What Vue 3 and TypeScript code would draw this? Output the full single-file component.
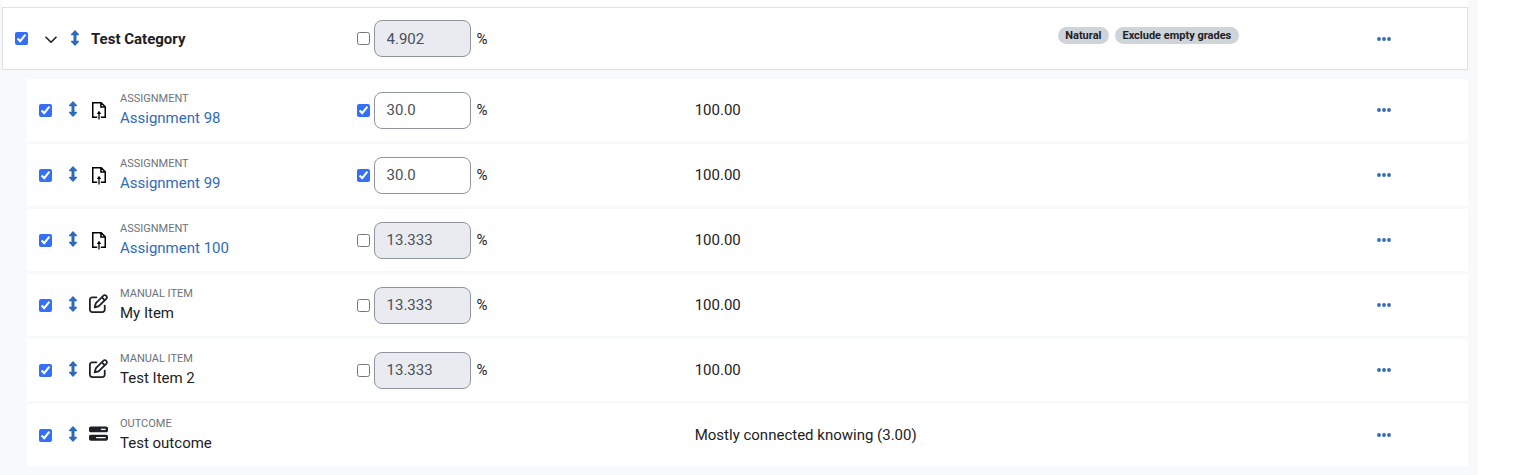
<script setup lang="ts">
import { ref } from 'vue'

type Kind = 'assignment' | 'manual' | 'outcome'

interface GradeItem {
  id: number
  kind: Kind
  type: string
  name: string
  selected: boolean
  weight?: string
  override: boolean
  max: string
}

const category = ref({
  name: 'Test Category',
  selected: true,
  open: true,
  override: false,
  weight: '4.902',
  badges: ['Natural', 'Exclude empty grades'],
})

const items = ref<GradeItem[]>([
  { id: 1, kind: 'assignment', type: 'Assignment', name: 'Assignment 98', selected: true, weight: '30.0', override: true, max: '100.00' },
  { id: 2, kind: 'assignment', type: 'Assignment', name: 'Assignment 99', selected: true, weight: '30.0', override: true, max: '100.00' },
  { id: 3, kind: 'assignment', type: 'Assignment', name: 'Assignment 100', selected: true, weight: '13.333', override: false, max: '100.00' },
  { id: 4, kind: 'manual', type: 'Manual item', name: 'My Item', selected: true, weight: '13.333', override: false, max: '100.00' },
  { id: 5, kind: 'manual', type: 'Manual item', name: 'Test Item 2', selected: true, weight: '13.333', override: false, max: '100.00' },
  { id: 6, kind: 'outcome', type: 'Outcome', name: 'Test outcome', selected: true, override: false, max: 'Mostly connected knowing (3.00)' },
])

const arrowPath = 'M5 0 9 4.2Q9.3 5.2 8.4 5.2H6.5V10.8H8.4Q9.3 10.8 9 11.8L5 16 1 11.8Q.7 10.8 1.6 10.8H3.5V5.2H1.6Q.7 5.2 1 4.2Z'
const editPath =
  'M441 58.9L453.1 71c9.4 9.4 9.4 24.6 0 33.9L424 134.1 377.9 88 407 58.9c9.4-9.4 24.6-9.4 33.9 0zM209.8 256.2L344 121.9 390.1 168 255.8 302.2c-2.9 2.9-6.5 5-10.4 6.1l-58.5 16.7 16.7-58.5c1.1-3.9 3.2-7.5 6.1-10.4zM373.1 25L175.8 222.2c-8.7 8.7-15 19.4-18.3 31.1l-28.6 100c-2.4 8.4-.1 17.4 6.1 23.6s15.2 8.5 23.6 6.1l100-28.6c11.8-3.4 22.5-9.7 31.1-18.3L487 138.9c28.1-28.1 28.1-73.7 0-101.8L474.9 25C446.8-3.1 401.2-3.1 373.1 25zM88 64C39.4 64 0 103.4 0 152V424c0 48.6 39.4 88 88 88H360c48.6 0 88-39.4 88-88V312c0-13.3-10.7-24-24-24s-24 10.7-24 24V424c0 22.1-17.9 40-40 40H88c-22.1 0-40-17.9-40-40V152c0-22.1 17.9-40 40-40H200c13.3 0 24-10.7 24-24s-10.7-24-24-24H88z'
const barsPath =
  'M448 160H320V128H448v32zM48 64C21.5 64 0 85.5 0 112v64c0 26.5 21.5 48 48 48H464c26.5 0 48-21.5 48-48V112c0-26.5-21.5-48-48-48H48zM448 352v32H192V352H448zM48 288c-26.5 0-48 21.5-48 48v64c0 26.5 21.5 48 48 48H464c26.5 0 48-21.5 48-48V336c0-26.5-21.5-48-48-48H48z'
</script>

<template>
  <main class="panel">
    <table class="grades">
      <colgroup>
        <col class="c-indent" />
        <col class="c-name" />
        <col class="c-weight" />
        <col class="c-max" />
        <col class="c-status" />
        <col />
      </colgroup>
      <tbody>
        <tr class="lead"><td colspan="6"></td></tr>
        <tr class="category">
          <td colspan="2">
            <div class="name-cell">
              <input v-model="category.selected" type="checkbox" :aria-label="`Select ${category.name}`" />
              <button class="toggle" type="button" aria-label="Collapse" :aria-expanded="category.open" @click="category.open = !category.open">
                <svg width="12" height="8" viewBox="0 0 12 8"><path d="M1 1.2 6 6.2 11 1.2" fill="none" stroke="currentColor" stroke-width="1.6" stroke-linecap="round" stroke-linejoin="round" /></svg>
              </button>
              <button class="move" type="button" :aria-label="`Move ${category.name}`">
                <svg width="10" height="16" viewBox="0 0 10 16"><path :d="arrowPath" /></svg>
              </button>
              <strong>{{ category.name }}</strong>
            </div>
          </td>
          <td class="weight-cell">
            <div class="weight">
              <input v-model="category.override" type="checkbox" :aria-label="`Adjust weight of ${category.name}`" />
              <input v-model="category.weight" class="field" type="text" :disabled="!category.override" :aria-label="`Weight of ${category.name}`" />
              <span>%</span>
            </div>
          </td>
          <td></td>
          <td>
            <div class="badges">
              <span v-for="b in category.badges" :key="b" class="badge">{{ b }}</span>
            </div>
          </td>
          <td class="action-cell">
            <button class="more" type="button" :aria-label="`Actions for ${category.name}`">
              <svg width="14" height="4" viewBox="0 0 14 4"><circle cx="2" cy="2" r="1.9" /><circle cx="7" cy="2" r="1.9" /><circle cx="12" cy="2" r="1.9" /></svg>
            </button>
          </td>
        </tr>
        <tr class="spacer"><td colspan="6"></td></tr>
        <template v-if="category.open">
          <tr v-for="item in items" :key="item.id" class="item">
            <td class="indent"></td>
            <td>
              <div class="name-cell">
                <input v-model="item.selected" type="checkbox" :aria-label="`Select ${item.name}`" />
                <button class="move" type="button" :aria-label="`Move ${item.name}`">
                  <svg width="10" height="16" viewBox="0 0 10 16"><path :d="arrowPath" /></svg>
                </button>
                <span class="kind">
                  <svg v-if="item.kind === 'assignment'" class="file" width="14" height="18" viewBox="0 0 14 18">
                    <path d="M5.2 15.25H.75V.75H9.2L13.25 4.8V15.25H8.8M8.9 1V5.1H13" fill="none" stroke="#000" stroke-width="1.5" />
                    <path d="M7 17.6V10.5" stroke="#000" stroke-width="1.3" />
                    <path d="M7 8.7 9.2 11.9H4.8Z" fill="#000" />
                  </svg>
                  <svg v-else width="19" height="19" viewBox="0 0 512 512"><path :d="item.kind === 'manual' ? editPath : barsPath" fill="currentColor" /></svg>
                </span>
                <div class="label">
                  <span class="type">{{ item.type }}</span>
                  <a v-if="item.kind === 'assignment'" href="#">{{ item.name }}</a>
                  <span v-else>{{ item.name }}</span>
                </div>
              </div>
            </td>
            <td class="weight-cell">
              <div v-if="item.weight !== undefined" class="weight">
                <input v-model="item.override" type="checkbox" :aria-label="`Adjust weight of ${item.name}`" />
                <input v-model="item.weight" class="field" type="text" :disabled="!item.override" :aria-label="`Weight of ${item.name}`" />
                <span>%</span>
              </div>
            </td>
            <td>{{ item.max }}</td>
            <td></td>
            <td class="action-cell">
              <button class="more" type="button" :aria-label="`Actions for ${item.name}`">
                <svg width="14" height="4" viewBox="0 0 14 4"><circle cx="2" cy="2" r="1.9" /><circle cx="7" cy="2" r="1.9" /><circle cx="12" cy="2" r="1.9" /></svg>
              </button>
            </td>
          </tr>
        </template>
      </tbody>
    </table>
  </main>
</template>

<style>
body {
  background: #fff;
}
</style>

<style scoped>
.panel {
  box-sizing: border-box;
  min-height: 100vh;
  margin-right: 62px;
  padding: 0 10px 0 2px;
  background: #f8f9fb;
  color: #1d2125;
  font: 15px/22px Roboto, sans-serif;
}
.grades {
  width: 100%;
  table-layout: fixed;
  border-collapse: separate;
  border-spacing: 0;
}
.c-indent { width: 25px; }
.c-name { width: 22%; }
.c-weight { width: 23%; }
.c-max { width: 24.8%; }
.c-status { width: 21.8%; }
td {
  box-sizing: border-box;
  padding: 0 8px;
  background: #fff;
  vertical-align: middle;
}
td:has(.name-cell) { padding: 0 0 0 12px; }
.weight-cell { padding-left: 7px; }
.action-cell { padding-left: 6px; }
.lead td { height: 7px; padding: 0; }
.spacer td { height: 9px; padding: 0; background: transparent; }
.category td {
  height: 63px;
  border: solid #dee2e6;
  border-width: 1px 0;
}
.category td:first-child { border-left-width: 1px; }
.category td:last-child { border-right-width: 1px; }
.item td {
  height: 65px;
  border-bottom: 3px solid #f8f9fb;
}
.item .indent { padding: 0; background: transparent; }
.name-cell,
.weight,
.badges {
  display: flex;
  align-items: center;
}
input[type='checkbox'] {
  flex: none;
  width: 13px;
  height: 13px;
  margin: 0;
  accent-color: #3470f6;
}
button {
  display: flex;
  flex: none;
  align-items: center;
  justify-content: center;
  padding: 0;
  border: 0;
  background: none;
  color: inherit;
  cursor: pointer;
}
.toggle {
  width: 16px;
  height: 16px;
  margin-left: 15px;
  padding-top: 2px;
}
.move {
  width: 16px;
  height: 18px;
  margin-left: 13px;
  padding-bottom: 2px;
}
.category .move { margin-left: 8px; }
.move path,
.more circle { fill: #306bba; }
.category strong { margin-left: 8px; }
.kind {
  display: flex;
  flex: none;
  justify-content: center;
  width: 20px;
  margin-left: 7px;
  padding-bottom: 3px;
}
.file { margin-top: 4px; margin-left: 2px; }
.label {
  display: flex;
  flex-direction: column;
  margin-left: 12px;
}
.type {
  color: #6a737b;
  font-size: 11px;
  line-height: 16px;
  text-transform: uppercase;
}
a {
  color: #306bba;
  text-decoration: none;
}
.field {
  box-sizing: border-box;
  width: 97px;
  height: 37px;
  margin: 0 6px 0 4px;
  padding: 0 12px;
  border: 1px solid #8f959e;
  border-radius: 8px;
  background: #fff;
  color: #495057;
  font: inherit;
}
.field:disabled { background: #e9ebf0; }
.badges {
  gap: 6px;
  padding-bottom: 6px;
}
.badge {
  padding: 0 8px 0 7px;
  border-radius: 9px;
  background: #ced4da;
  font-size: 11px;
  font-weight: 700;
  line-height: 17px;
  white-space: nowrap;
}
.more {
  width: 16px;
  height: 20px;
}
</style>
